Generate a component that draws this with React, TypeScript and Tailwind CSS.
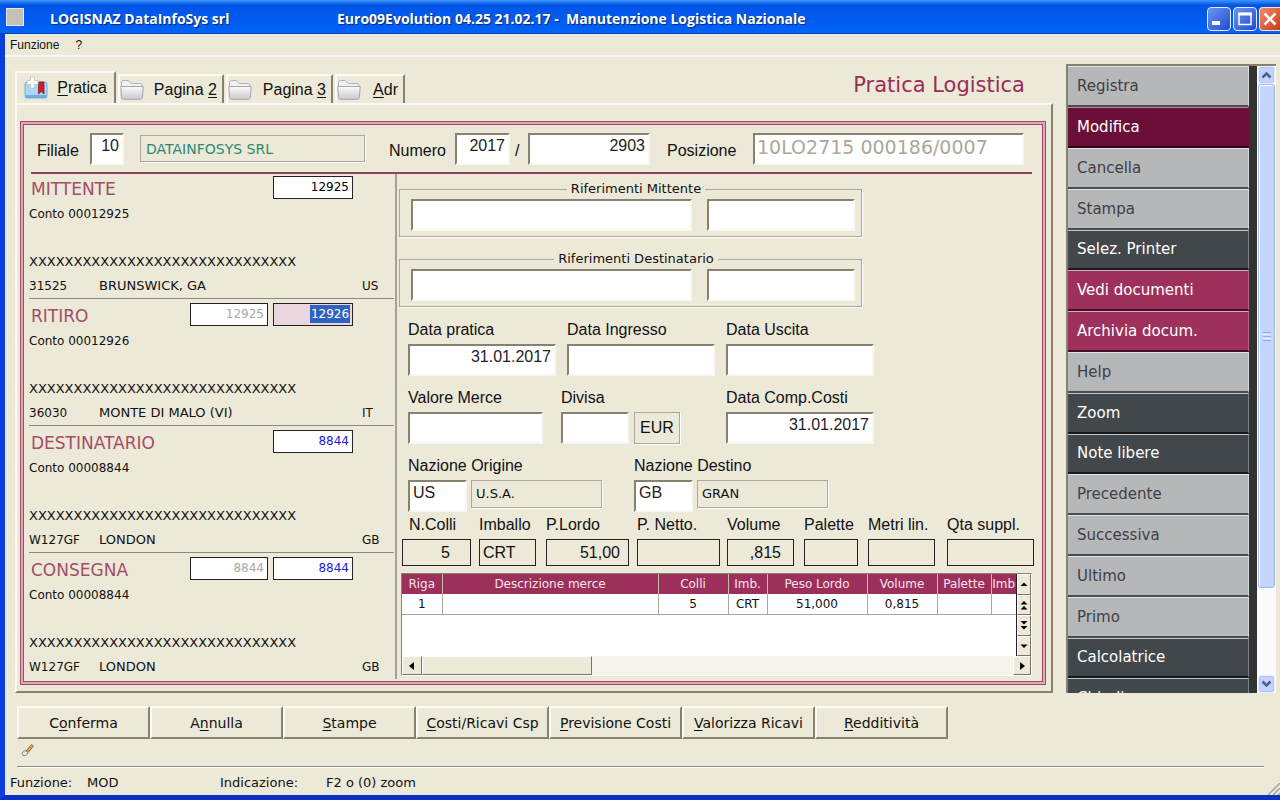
import React from 'react'

type Party = {
  title: string
  code: string
  altCode?: string
  codeStyle: string
  account: string
  zip: string
  city: string
  country: string
}

const parties: Party[] = [
  { title: 'MITTENTE', code: '12925', codeStyle: 'bg-white text-black', account: '00012925', zip: '31525', city: 'BRUNSWICK, GA', country: 'US' },
  { title: 'RITIRO', code: '12926', altCode: '12925', codeStyle: 'bg-[#ead6e0] text-white', account: '00012926', zip: '36030', city: 'MONTE DI MALO (VI)', country: 'IT' },
  { title: 'DESTINATARIO', code: '8844', codeStyle: 'bg-white text-[#1a1ae0]', account: '00008844', zip: 'W127GF', city: 'LONDON', country: 'GB' },
  { title: 'CONSEGNA', code: '8844', altCode: '8844', codeStyle: 'bg-white text-[#1a1ae0]', account: '00008844', zip: 'W127GF', city: 'LONDON', country: 'GB' },
]

const tones = {
  light: 'bg-[#b6b7b9] text-[#3f4044] border-t-[#e2e3e5] border-r-[#d8d9db] border-b-[#4c4c4c]',
  active: 'bg-[#6b0f38] text-white border-t-[#b58a9c] border-r-[#6b0f38] border-b-[#2c0517]',
  dark: 'bg-[#42474b] text-white border-t-[#c4c6c8] border-r-[#7b8084] border-b-[#17191b]',
  pink: 'bg-[#9e315b] text-white border-t-[#d9a9bc] border-r-[#b8648a] border-b-[#3f1225]',
}

const actions: { label: string; tone: keyof typeof tones }[] = [
  { label: 'Registra', tone: 'light' },
  { label: 'Modifica', tone: 'active' },
  { label: 'Cancella', tone: 'light' },
  { label: 'Stampa', tone: 'light' },
  { label: 'Selez. Printer', tone: 'dark' },
  { label: 'Vedi documenti', tone: 'pink' },
  { label: 'Archivia docum.', tone: 'pink' },
  { label: 'Help', tone: 'light' },
  { label: 'Zoom', tone: 'dark' },
  { label: 'Note libere', tone: 'dark' },
  { label: 'Precedente', tone: 'light' },
  { label: 'Successiva', tone: 'light' },
  { label: 'Ultimo', tone: 'light' },
  { label: 'Primo', tone: 'light' },
  { label: 'Calcolatrice', tone: 'dark' },
  { label: 'Chiudi', tone: 'dark' },
]

const totals = [
  { label: 'N.Colli', value: '5', box: 'w-[69px] mr-2 pr-5 text-right', text: 'pl-[7px]' },
  { label: 'Imballo', value: 'CRT', box: 'w-[57px] mr-[10px] pl-[3px]', text: '' },
  { label: 'P.Lordo', value: '51,00', box: 'w-[83px] mr-2 pr-2 text-right', text: '' },
  { label: 'P. Netto.', value: '', box: 'w-[83px] mr-[7px]', text: '' },
  { label: 'Volume', value: ',815', box: 'w-[67px] mr-[10px] pr-3 text-right', text: '' },
  { label: 'Palette', value: '', box: 'w-[54px] mr-[10px]', text: '' },
  { label: 'Metri lin.', value: '', box: 'w-[67px] mr-3', text: '' },
  { label: 'Qta suppl.', value: '', box: 'w-[87px]', text: '' },
]

const columns = [
  { label: 'Riga', value: '1', width: 'w-[40px]' },
  { label: 'Descrizione merce', value: '', width: '' },
  { label: 'Colli', value: '5', width: 'w-[70px]' },
  { label: 'Imb.', value: 'CRT', width: 'w-[39px]' },
  { label: 'Peso Lordo', value: '51,000', width: 'w-[100px]' },
  { label: 'Volume', value: '0,815', width: 'w-[70px]' },
  { label: 'Palette', value: '', width: 'w-[54px]' },
  { label: 'Imb', value: '', width: 'w-[25px]' },
]

// Each label is split around its keyboard accelerator
const commands = [
  ['C', 'o', 'nferma'],
  ['A', 'n', 'nulla'],
  ['', 'S', 'tampe'],
  ['', 'C', 'osti/Ricavi Csp'],
  ['', 'P', 'revisione Costi'],
  ['', 'V', 'alorizza Ricavi'],
  ['', 'R', 'edditività'],
]

const sunken =
  "h-8 bg-white border-2 border-t-[#85826f] border-l-[#85826f] border-r-[#f8f7f0] border-b-[#f8f7f0] px-[3px] pb-[6px] font-['Liberation_Sans',Arial,sans-serif] text-base leading-5 text-[#222] outline-none"
const readonlyBox = 'flex items-center border border-[#aca899] shadow-[1px_1px_0_#ffffff]'
const raised = 'bg-[#ece9d8] border border-t-white border-l-white border-r-[#77756a] border-b-[#77756a]'

const Field: React.FC<{ label: string; className?: string; value?: string; right?: boolean; children?: React.ReactNode }> = ({
  label,
  className = '',
  value = '',
  right,
  children,
}) => (
  <div className="flex items-end">
    <label className="flex flex-col gap-1 whitespace-nowrap">
      <span className="h-5 w-0 leading-5">{label}</span>
      <input defaultValue={value} className={`${sunken} ${right ? 'text-right' : ''} ${className}`} />
    </label>
    {children}
  </div>
)

const FolderIcon = () => (
  <svg width="24" height="22" viewBox="0 0 24 22" className="shrink-0">
    <defs>
      <linearGradient id="folder" x1="0" y1="0" x2="0" y2="1">
        <stop offset="0" stopColor="#fbfbfc" />
        <stop offset="1" stopColor="#c9c9ce" />
      </linearGradient>
    </defs>
    <path d="M1.5 6V3.500a2 2 0 0 1 2-2h5l2.500 3H20a2 2 0 0 1 2 2V9H1.500z" fill="#f1f1f2" stroke="#b4b4b6" />
    <path d="M.8 7.500h22.400L22.400 18.500a2 2 0 0 1-2 1.800H3.500a2 2 0 0 1-2-1.800z" fill="url(#folder)" stroke="#a6a6ab" />
  </svg>
)

const BookmarkFolderIcon = () => (
  <svg width="24" height="24" viewBox="0 0 24 24" className="shrink-0">
    <path d="M1 8a2 2 0 0 1 2-2h18a2 2 0 0 1 2 2v12a2 2 0 0 1-2 2H3a2 2 0 0 1-2-2z" fill="#a9d6f3" stroke="#7eaed2" />
    <path d="M1.500 19h21v1.500a1.500 1.500 0 0 1-1.500 1.500H3a1.500 1.500 0 0 1-1.500-1.500z" fill="#6aaee0" />
    <path d="M14.500 6h5.500v12l-2.700-2.500-2.800 2.500z" fill="#c8202c" stroke="#8d1019" strokeWidth=".7" />
    <path d="M6.500 1h4v3.500H14v4h-3.500V12h-4V8.500H3v-4h3.500z" fill="#fff" stroke="#b9c4cc" strokeWidth=".8" />
  </svg>
)

const Tab: React.FC<{ pre?: string; hot: string; post?: string; first?: boolean; className: string }> = ({ pre, hot, post, first, className }) => (
  <button
    type="button"
    className={`flex items-center justify-between border-t-2 border-r-2 border-l-2 border-t-[#fbfaf3] border-r-[#85826f] border-l-[#fbfaf3] text-base ${className}`}
  >
    {first ? <BookmarkFolderIcon /> : <FolderIcon />}
    <span className="whitespace-pre">
      {pre}
      <u className="underline-offset-2">{hot}</u>
      {post}
    </span>
  </button>
)

const PartySection: React.FC<{ party: Party }> = ({ party }) => {
  const id = party.title.toLowerCase()
  return (
    <section className="mr-px ml-[5px] border-b border-[#8d8b7f] pt-0.5 text-xs first:pt-0 last:border-b-0">
      <div className="flex h-[124px] flex-col">
        <div className="flex h-[30px] items-start gap-[5px] pt-0.5 pr-[41px]">
          <label htmlFor={id} className="mr-auto pl-0.5 text-[17px] leading-[27px] text-[#a44d68]">
            {party.title}
          </label>
          {party.altCode && (
            <input
              aria-label={`${party.title} collegato`}
              disabled
              defaultValue={party.altCode}
              className="h-[23px] w-[78px] border border-[#222] bg-white px-[3px] pb-0.5 text-right text-[#a9a9a9]"
            />
          )}
          {party.title === 'RITIRO' ? (
            <div className={`flex h-[23px] w-20 justify-end border border-[#222] px-0.5 py-px ${party.codeStyle}`}>
              <input id={id} defaultValue={party.code} className="h-[18px] w-10 bg-[#2f63c0] text-center outline-none" />
            </div>
          ) : (
            <input
              id={id}
              defaultValue={party.code}
              className={`h-[23px] w-20 border border-[#222] px-[3px] pb-0.5 text-right outline-none ${party.codeStyle}`}
            />
          )}
        </div>
        <p className="h-5 leading-5">Conto {party.account}</p>
        <p className="mt-7 h-5 text-[13px] leading-5">XXXXXXXXXXXXXXXXXXXXXXXXXXXXXX</p>
        <div className="mt-1 flex h-5 items-baseline leading-5">
          <span className="w-[70px]">{party.zip}</span>
          <span className="flex-1 text-[13px]">{party.city}</span>
          <span className="w-8">{party.country}</span>
        </div>
      </div>
    </section>
  )
}

const References: React.FC<{ title: string }> = ({ title }) => (
  <fieldset className="flex h-[58px] w-[463px] gap-[15px] border border-[#aca899] pl-[11px] shadow-[1px_1px_0_#ffffff]">
    <legend className="mx-auto px-1 text-[13px] leading-5">{title}</legend>
    <input aria-label={`${title} 1`} className={`${sunken} w-[281px]`} />
    <input aria-label={`${title} 2`} className={`${sunken} w-[148px]`} />
  </fieldset>
)

const arrows = [
  { name: 'Prima riga', d: 'M3.500 9L7 5.500 10.500 9z' },
  { name: 'Pagina su', d: 'M3.500 6.500L7 3l3.500 3.500zM3.500 11.500L7 8l3.500 3.500z' },
  { name: 'Pagina giù', d: 'M3.500 3L7 6.500 10.500 3zM3.500 8L7 11.500 10.500 8z' },
  { name: 'Ultima riga', d: 'M3.500 5.500L7 9l3.500-3.500z' },
]

const GoodsTable = () => (
  <div className="mt-[7px] mr-[10px] ml-0.5 border border-t-[#85826f] border-r-white border-b-white border-l-[#85826f] bg-white text-xs">
    <div className="flex h-[82px]">
      <div className="flex-1 overflow-hidden">
        <table className="w-full table-fixed border-collapse">
          <thead>
            <tr className="h-5 bg-[#9c305b] text-[#fbe3ec]">
              {columns.map((col, i) => (
                <th key={i} className={`overflow-hidden border-r border-[#c9bfae] p-0 font-normal whitespace-nowrap last:border-r-0 ${col.width}`}>
                  {col.label}
                </th>
              ))}
            </tr>
          </thead>
          <tbody>
            <tr className="h-5">
              {columns.map((col, i) => (
                <td key={i} className="border-r border-b border-[#aca899] p-0 text-center last:border-r-0">
                  {col.value}
                </td>
              ))}
            </tr>
          </tbody>
        </table>
      </div>
      <div className="flex w-[15px] flex-col border-l border-[#222]">
        {arrows.map((arrow) => (
          <button key={arrow.name} type="button" aria-label={arrow.name} className={`flex flex-1 items-center justify-center ${raised}`}>
            <svg width="14" height="14" viewBox="0 0 14 14" className="shrink-0">
              <path d={arrow.d} />
            </svg>
          </button>
        ))}
      </div>
    </div>
    <div className="flex h-[19px] bg-[#f5f4ec]">
      <button type="button" aria-label="Scorri a sinistra" className={`flex w-5 items-center justify-center ${raised}`}>
        <svg width="10" height="10" viewBox="0 0 10 10">
          <path d="M7 1v8L2 5z" />
        </svg>
      </button>
      <div className={`w-[170px] ${raised}`} />
      <button type="button" aria-label="Scorri a destra" className={`ml-auto flex w-[18px] items-center justify-center ${raised}`}>
        <svg width="10" height="10" viewBox="0 0 10 10">
          <path d="M3 1v8l5-4z" />
        </svg>
      </button>
    </div>
  </div>
)

const ScrollArrow: React.FC<{ label: string; d: string }> = ({ label, d }) => (
  <button
    type="button"
    aria-label={label}
    className="flex h-[18px] items-center justify-center rounded-[3px] border border-[#e9effe] bg-[#c3d3fd] shadow-[inset_0_0_0_1px_#b4c6f5]"
  >
    <svg width="11" height="8" viewBox="0 0 11 8" fill="none" stroke="#4d6185" strokeWidth="2.5">
      <path d={d} />
    </svg>
  </button>
)

const ActionBar = () => (
  <aside className="-mt-px flex w-[210px] shrink-0 border-t-2 border-l-2 border-[#85826f] bg-[#333333]">
    <ul className="w-[181px] overflow-hidden contain-size">
      {actions.map((action) => (
        <li key={action.label} className="h-[41px] nth-[5n]:h-10">
          <button
            type="button"
            className={`h-full w-full border-t border-r border-b-2 pl-[9px] text-left text-[15px] ${tones[action.tone]}`}
          >
            {action.label}
          </button>
        </li>
      ))}
    </ul>
    <div className="ml-2 flex flex-1 flex-col bg-[#fbfbfd] px-px">
      <ScrollArrow label="Scorri su" d="M1.500 6.500l4-4 4 4" />
      <div className="flex basis-[504px] flex-col items-center justify-center gap-px rounded-[3px] border border-[#a3b8ee] bg-[#c5d5fc] shadow-[inset_1px_1px_0_#ffffff]">
        <div className="h-px w-2 bg-[#8cb0f8]" />
        <div className="h-px w-2 bg-[#eef4fe]" />
        <div className="h-px w-2 bg-[#8cb0f8]" />
        <div className="h-px w-2 bg-[#eef4fe]" />
        <div className="h-px w-2 bg-[#8cb0f8]" />
      </div>
      <div className="flex-1" />
      <ScrollArrow label="Scorri giù" d="M1.500 1.500l4 4 4-4" />
    </div>
  </aside>
)

const TitleBar = () => (
  <header className="-ml-[5px] flex h-[34px] items-center bg-linear-to-b from-[#3f94fb] from-0% via-[#0054e6] via-15% to-[#0064fb] pt-1 pl-1.5 font-['Open_Sans',sans-serif] text-sm font-bold text-white shadow-[inset_0_-1px_0_#0941b8] [text-shadow:1px_1px_1px_#0a2a80]">
    <span className="mb-1 size-[18px] border border-[#e8e8e8] bg-[#c3c0b8]" />
    <span className="w-[287px] pl-[26px]">LOGISNAZ DataInfoSys srl</span>
    <span className="flex-1 pl-[26px] whitespace-pre">Euro09Evolution 04.25 21.02.17 -  Manutenzione Logistica Nazionale</span>
    <div className="flex gap-0.5">
      <button type="button" aria-label="Riduci a icona" className="flex size-6 items-center justify-center rounded-[4px] border border-[#e6ecfb] bg-linear-to-br from-[#6d93f4] to-[#1e4bd0]">
        <svg width="16" height="16" viewBox="0 0 16 16" fill="#fff">
          <path d="M1 10h8v4H1z" />
        </svg>
      </button>
      <button type="button" aria-label="Ingrandisci" className="flex size-6 items-center justify-center rounded-[4px] border border-[#e6ecfb] bg-linear-to-br from-[#6d93f4] to-[#1e4bd0]">
        <svg width="16" height="16" viewBox="0 0 16 16" fill="none" stroke="#fff">
          <path d="M2 2.500h12v11H2z" strokeWidth="1.500" />
          <path d="M1.500 3h13" strokeWidth="3" />
        </svg>
      </button>
      <button type="button" aria-label="Chiudi finestra" className="flex h-6 w-[21px] items-center justify-center rounded-l-[4px] border border-r-0 border-[#f6e2dc] bg-linear-to-br from-[#f08a6a] to-[#cc3a10]">
        <svg width="16" height="16" viewBox="0 0 16 16" stroke="#fff" strokeWidth="2.500">
          <path d="M2.500 2.500l11 11M13.500 2.500l-11 11" />
        </svg>
      </button>
    </div>
  </header>
)

export default function App() {
  return (
    <div className="flex min-h-screen flex-col border-b-[5px] border-l-[5px] border-b-[#0a2fc4] border-l-[#0a3fdc] bg-[#ece9d8] font-['DejaVu_Sans',Verdana,sans-serif] text-[#111]">
      <TitleBar />
      <nav className="flex h-[23px] items-center gap-4 border-b-2 border-[#faf9f2] pl-[5px] font-['Liberation_Sans',Arial,sans-serif] text-xs">
        <button type="button">Funzione</button>
        <button type="button">?</button>
      </nav>

      <main className="flex gap-[13px] pt-2 pr-1 pl-[10px]">
        <div className="flex min-w-0 flex-1 flex-col pt-1.5">
          <div className="flex h-8 items-end gap-0.5 font-['Liberation_Sans',Arial,sans-serif]">
            <Tab first hot="P" post="ratica" className="h-8 w-[101px] pr-[7px] pl-[7px]" />
            <Tab pre="Pagina " hot="2" className="h-[29px] w-[106px] pr-[5px]" />
            <Tab pre="Pagina " hot="3" className="h-[29px] w-[107px] pr-[5px]" />
            <Tab hot="A" post="dr" className="h-[29px] w-[70px] pr-[5px]" />
            <h1 className="mr-7 ml-auto self-start font-['DejaVu_Sans',Verdana,sans-serif] text-[21px] leading-7 text-[#9a2c55]">Pratica Logistica</h1>
          </div>

          <div className="border-2 border-t-[#fbfaf3] border-r-[#85826f] border-b-[#85826f] border-l-[#fbfaf3] pt-4 pr-[5px] pb-1.5 pl-[3px]">
            <div className="border border-[#a04a66] bg-[#dfa9b5] p-0.5">
              <form className="border border-[#a04a66] bg-[#ece9d8] pb-0.5">
                <div className="mr-[10px] ml-[7px] flex h-[49px] items-center border-b-2 border-[#8c4259] pl-1.5 font-['Liberation_Sans',Arial,sans-serif] text-base">
                  <label htmlFor="filiale" className="w-[53px] pt-1">Filiale</label>
                  <input id="filiale" defaultValue="10" className={`${sunken} w-[34px] text-right`} />
                  <output className={`${readonlyBox} ml-4 h-[27px] w-[225px] pl-[5px] font-['DejaVu_Sans',Verdana,sans-serif] text-sm text-[#2b8a70]`}>
                    DATAINFOSYS SRL
                  </output>
                  <label htmlFor="anno" className="ml-6 w-[66px] pt-1">Numero</label>
                  <input id="anno" defaultValue="2017" className={`${sunken} w-[55px] text-right`} />
                  <span className="w-[18px] pt-1 pl-[5px]">/</span>
                  <input aria-label="Numero pratica" defaultValue="2903" className={`${sunken} w-[122px] text-right`} />
                  <label htmlFor="posizione" className="ml-[17px] w-[86px] pt-1">Posizione</label>
                  <input
                    id="posizione"
                    disabled
                    defaultValue="10LO2715 000186/0007"
                    className="mr-2 h-8 min-w-0 flex-1 border-2 border-t-[#85826f] border-r-[#f8f7f0] border-b-[#f8f7f0] border-l-[#85826f] bg-white px-0.5 pb-1 font-['DejaVu_Sans',Verdana,sans-serif] text-[19px] leading-6 text-[#aca899]"
                  />
                </div>

                <div className="flex">
                  <div className="w-[373px] shrink-0 border-r-2 border-[#a5a294]">
                    {parties.map((party) => (
                      <PartySection key={party.title} party={party} />
                    ))}
                  </div>

                  <div className="min-w-0 flex-1 pl-0.5">
                    <div className="flex flex-col gap-3 pt-[5px]">
                      <References title="Riferimenti Mittente" />
                      <References title="Riferimenti Destinatario" />
                    </div>

                    <div className="mt-[13px] flex flex-col gap-3 pl-[9px] font-['Liberation_Sans',Arial,sans-serif] text-base">
                      <div className="flex gap-[11px]">
                        <Field label="Data pratica" value="31.01.2017" right className="w-[148px]" />
                        <Field label="Data Ingresso" className="w-[148px]" />
                        <Field label="Data Uscita" className="w-[148px]" />
                      </div>
                      <div className="flex">
                        <Field label="Valore Merce" className="mr-[18px] w-[135px]" />
                        <Field label="Divisa" className="w-[68px]">
                          <output className={`${readonlyBox} mr-[46px] ml-[5px] h-8 w-[46px] justify-center`}>EUR</output>
                        </Field>
                        <Field label="Data Comp.Costi" value="31.01.2017" right className="w-[148px]" />
                      </div>
                      <div className="flex gap-8">
                        <Field label="Nazione Origine" value="US" className="w-[59px]">
                          <output className={`${readonlyBox} mb-1 ml-1 h-7 w-[131px] pl-1 font-['DejaVu_Sans',Verdana,sans-serif] text-[13px]`}>U.S.A.</output>
                        </Field>
                        <Field label="Nazione Destino" value="GB" className="w-[59px]">
                          <output className={`${readonlyBox} mb-1 ml-1 h-7 w-[131px] pl-1 font-['DejaVu_Sans',Verdana,sans-serif] text-[13px]`}>GRAN</output>
                        </Field>
                      </div>
                    </div>

                    <div className="mt-[3px] flex pl-[3px] font-['Liberation_Sans',Arial,sans-serif] text-base">
                      {totals.map((total) => (
                        <label key={total.label} className="flex flex-col gap-1">
                          <span className={`h-5 w-0 leading-5 whitespace-nowrap ${total.text}`}>{total.label}</span>
                          <input readOnly value={total.value} className={`h-[27px] border border-[#222] outline-none ${total.box}`} />
                        </label>
                      ))}
                    </div>

                    <GoodsTable />
                  </div>
                </div>
              </form>
            </div>
          </div>
        </div>

        <ActionBar />
      </main>

      <div className="mt-[13px] flex pl-3">
        {commands.map(([pre, hot, post]) => (
          <button
            key={pre + hot + post}
            type="button"
            className="h-[33px] w-[133px] border-2 border-t-[#fbfaf3] border-r-[#85826f] border-b-[#85826f] border-l-[#fbfaf3] text-sm whitespace-nowrap"
          >
            {pre}
            <u className="underline-offset-2">{hot}</u>
            {post}
          </button>
        ))}
      </div>

      <div className="mr-4 ml-3 h-7 border-b border-[#8d8b7f] pt-1 pl-1 shadow-[0_1px_0_#ffffff]">
        <svg width="14" height="14" viewBox="0 0 14 14">
          <path d="M5 8l5.500-6.500 2 1.500L7 9.500z" fill="#e7a04a" stroke="#7b5426" strokeWidth=".8" />
          <path d="M1 10.500C1.500 8.500 3 7.500 4.800 7.800L7 9.600C6.500 12 4.500 13 2 12.500z" fill="#e4e2da" stroke="#6b6b66" strokeWidth=".8" />
        </svg>
      </div>

      <footer className="flex flex-1 items-center pt-1 pl-[5px] text-[13px]">
        <span className="w-[77px]">Funzione:</span>
        <span className="w-[133px]">MOD</span>
        <span className="w-[106px]">Indicazione:</span>
        <span className="flex-1">F2 o (0) zoom</span>
        <svg width="12" height="12" viewBox="0 0 12 12" className="self-end" stroke="#a5a294" strokeWidth="1.500">
          <path d="M0 12L12 0M5 12l7-7M10 12l2-2" />
        </svg>
      </footer>
    </div>
  )
}
